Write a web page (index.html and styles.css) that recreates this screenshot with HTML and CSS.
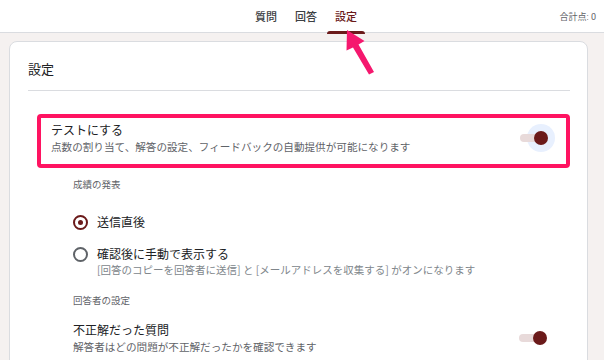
FILE: index.html
```html
<!DOCTYPE html>
<html lang="ja">
<head>
    <meta charset="UTF-8">
    <meta name="viewport" content="width=device-width, initial-scale=1.0">
    <title>設定</title>
    <link rel="stylesheet" href="styles.css">
</head>
<body>

    <!-- Top tabs -->
    <header class="topbar">
        <div></div>
        <nav class="tabs">
            <span class="tab">質問</span>
            <span class="tab">回答</span>
            <span class="tab active">設定</span>
        </nav>
        <div class="score">合計点: 0</div>
    </header>

    <!-- Pointer arrow -->
    <svg class="arrow" width="50" height="60" viewBox="330 20 50 60">
        <polygon points="347,30 364.5,41 358.5,44.5 374,72 369,74.5 353,47.5 346.5,50.5" fill="#f5186e"/>
    </svg>

    <main class="card">
        <h2 class="card-title">設定</h2>

        <div class="highlight">
            <div class="row">
                <div>
                    <div class="row-title">テストにする</div>
                    <div class="row-sub">点数の割り当て、解答の設定、フィードバックの自動提供が可能になります</div>
                </div>
                <div class="toggle focus"><span class="track"></span><span class="thumb"></span></div>
            </div>
        </div>

        <div class="section">
            <div class="section-label">成績の発表</div>

            <div class="radio-row first">
                <span class="radio checked"></span>
                <span class="radio-label">送信直後</span>
            </div>
            <div class="radio-row">
                <span class="radio"></span>
                <span class="radio-label">確認後に手動で表示する</span>
            </div>
            <div class="radio-sub">[回答のコピーを回答者に送信] と [メールアドレスを収集する] がオンになります</div>

            <div class="section-label second">回答者の設定</div>

            <div class="row plain">
                <div>
                    <div class="row-title">不正解だった質問</div>
                    <div class="row-sub">解答者はどの問題が不正解だったかを確認できます</div>
                </div>
                <div class="toggle"><span class="track"></span><span class="thumb"></span></div>
            </div>
        </div>
    </main>

</body>
</html>
```

FILE: styles.css
```css
body {
    margin: 0;
    background-color: #f5f1f0;
    font-family: "Noto Sans CJK JP", "Noto Sans", sans-serif;
    color: #202124;
    overflow: hidden;
}
.topbar {
    display: grid;
    grid-template-columns: 1fr auto 1fr;
    align-items: stretch;
    height: 32px;
    background: #fff;
    border-bottom: 1px solid #dadce0;
}
.tabs { display: flex; gap: 2px; margin-left: 8px; }
.tab {
    padding: 0 8px;
    font-size: 11px;
    font-weight: 500;
    line-height: 32px;
    color: #3c4043;
    position: relative;
}
.tab.active { color: #6b1a1a; }
.tab.active::after {
    content: "";
    position: absolute;
    left: 0;
    right: 0;
    bottom: 0;
    height: 3px;
    background: #6b1a1a;
    border-radius: 3px 3px 0 0;
}
.score {
    justify-self: end;
    padding-right: 8px;
    font-family: Roboto, "Noto Sans CJK JP", sans-serif;
    font-size: 9px;
    line-height: 34px;
    color: #5f6368;
}
.arrow {
    position: absolute;
    left: 330px;
    top: 20px;
}
.card {
    margin: 8px 16px 0 9px;
    background: #fff;
    border: 1px solid #dadce0;
    border-radius: 8px;
    padding: 0 17px 40px 18px;
}
.card-title {
    margin: 0;
    padding: 17px 0 11px;
    font-size: 13px;
    font-weight: 400;
    line-height: 20px;
    border-bottom: 1px solid #dadce0;
}
.highlight {
    margin: 23px 0 0 9px;
    border: 4px solid #ff1361;
    border-radius: 4px;
    padding: 3px 11px 9px 10px;
}
.row {
    display: flex;
    justify-content: space-between;
    align-items: center;
}
.row.plain { margin-top: 14px; padding-right: 16px; }
.row-title { font-size: 12px; line-height: 18px; }
.row-sub { font-size: 10.6px; line-height: 16px; color: #5f6368; }
.toggle {
    position: relative;
    width: 35px;
    height: 28px;
    flex-shrink: 0;
}
.toggle .track {
    position: absolute;
    left: 0;
    top: 10px;
    width: 25px;
    height: 8px;
    border-radius: 4px;
    background: #e8dada;
}
.toggle .thumb {
    position: absolute;
    left: 14px;
    top: 7px;
    width: 14px;
    height: 14px;
    border-radius: 50%;
    background: #6b1a1a;
}
.toggle.focus::before {
    content: "";
    position: absolute;
    left: 7px;
    top: 0;
    width: 28px;
    height: 28px;
    border-radius: 50%;
    background: #e8f0fe;
}
.section { padding-left: 45px; }
.section-label {
    margin-top: 9px;
    font-size: 9.5px;
    line-height: 14px;
    color: #5f6368;
}
.section-label.second { margin-top: 16px; }
.radio-row {
    display: flex;
    align-items: center;
    gap: 9px;
    margin-top: 14px;
}
.radio-row.first { margin-top: 22px; }
.radio {
    width: 11px;
    height: 11px;
    border: 2px solid #5f6368;
    border-radius: 50%;
    position: relative;
}
.radio.checked { border-color: #6b1a1a; }
.radio.checked::after {
    content: "";
    position: absolute;
    left: 3px;
    top: 3px;
    width: 5px;
    height: 5px;
    border-radius: 50%;
    background: #6b1a1a;
}
.radio-label { font-size: 12px; line-height: 18px; }
.radio-sub {
    padding-left: 24px;
    font-size: 10.5px;
    line-height: 14px;
    color: #80868b;
}
```
